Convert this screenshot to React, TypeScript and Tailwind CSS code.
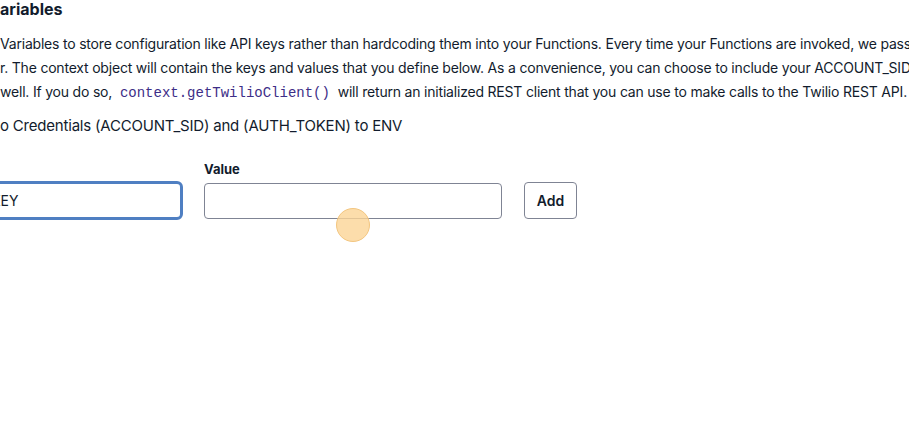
import { FC } from "react";

const CursorDot: FC = () => (
  <span className="pointer-events-none absolute left-[336px] top-[208px] h-[34px] w-[34px] rounded-full border border-[#f3c680] bg-[#fbd596]/80" />
);

export default function App() {
  return (
    <div
      className="relative h-[426px] w-[909px] overflow-hidden bg-white text-[#121c2d]"
      style={{ fontFamily: "Inter, 'Liberation Sans', sans-serif" }}
    >
      <div className="flex flex-col">
        <h2 className="whitespace-nowrap text-base font-bold leading-[18px]">ariables</h2>

        <div className="mt-[14px] whitespace-nowrap text-sm leading-6 tracking-[-0.2px]">
          <p>
            Variables to store configuration like API keys rather than hardcoding them into your
            Functions. Every time your Functions are invoked, we pass
          </p>
          <p>
            r. The context object will contain the keys and values that you define below. As a
            convenience, you can choose to include your ACCOUNT_SID
          </p>
          <p>
            well. If you do so,{" "}
            <code
              className="px-1 tracking-normal text-[#3d2e87]"
              style={{ fontFamily: "'Liberation Mono', monospace" }}
            >
              context.getTwilioClient()
            </code>{" "}
            will return an initialized REST client that you can use to make calls to the Twilio REST
            API.
          </p>
        </div>

        <label className="mt-[9px] whitespace-nowrap text-[15px] leading-6 tracking-[-0.2px]">
          o Credentials (ACCOUNT_SID) and (AUTH_TOKEN) to ENV
        </label>

        <div className="mt-[23px] flex items-end">
          <input
            readOnly
            aria-label="Key"
            value="API_KEY"
            className="-mb-px -ml-[59px] h-[39px] w-[242px] rounded-[6px] border-[3px] border-[#4f7fc2] pl-[18px] text-sm outline-none"
          />
          <div className="ml-[21px] flex w-[298px] flex-col">
            <span className="mb-[6px] text-[13px] font-bold leading-4">Value</span>
            <input
              readOnly
              className="h-9 rounded-[4px] border border-[#7f8494] text-sm outline-none"
            />
          </div>
          <button className="ml-[22px] h-[37px] w-[53px] rounded-[4px] border border-[#7f8494] text-sm font-semibold">
            Add
          </button>
        </div>
      </div>

      <CursorDot />
    </div>
  );
}
